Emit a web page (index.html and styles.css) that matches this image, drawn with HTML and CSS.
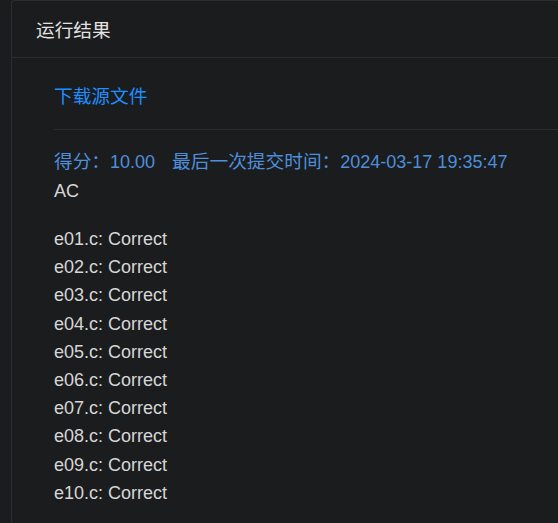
FILE: index.html
```html
<!DOCTYPE html>
<html lang="zh-CN">
<head>
<meta charset="utf-8">
<title>运行结果</title>
<link rel="stylesheet" href="styles.css">
</head>
<body>
<div class="card">
  <div class="card-header"><span class="cjk">运行结果</span></div>
  <div class="card-body">
    <div class="download"><a class="link cjk" href="#">下载源文件</a></div>
    <div class="divider"></div>
    <div class="score"><span class="cjk">得分：</span>10.00<span class="gap"></span><span class="cjk">最后一次提交时间：</span>2024-03-17 19:35:47</div>
    <div class="status">AC</div>
    <ul class="results">
      <li>e01.c: Correct</li>
      <li>e02.c: Correct</li>
      <li>e03.c: Correct</li>
      <li>e04.c: Correct</li>
      <li>e05.c: Correct</li>
      <li>e06.c: Correct</li>
      <li>e07.c: Correct</li>
      <li>e08.c: Correct</li>
      <li>e09.c: Correct</li>
      <li>e10.c: Correct</li>
    </ul>
  </div>
</div>
</body>
</html>
```

FILE: styles.css
```css
html, body {
  margin: 0;
  padding: 0;
  height: 100%;
  overflow: hidden;
  background: #1b1c1e;
}
body {
  font-family: "Liberation Sans", "Noto Sans CJK SC", sans-serif;
  font-size: 18px;
  color: #d6d6d6;
}
.cjk {
  font-size: 18.7px;
}
.card {
  box-sizing: border-box;
  margin-left: 11px;
  height: 100%;
  border: 1px solid #2c2d30;
  border-right: none;
  border-bottom: none;
  border-top-left-radius: 4px;
  background: #1b1c1e;
}
.card-header {
  height: 56px;
  line-height: 60px;
  padding-left: 24px;
  border-bottom: 1px solid #2c2d30;
  color: #e2e2e2;
}
.card-body {
  padding: 25px 0 0 42px;
}
.download {
  line-height: 28px;
}
.link {
  color: #1e8fff;
  text-decoration: none;
}
.divider {
  margin-top: 18px;
  border-top: 1px solid #2c2d30;
}
.score {
  margin-top: 18px;
  line-height: 28px;
  color: #4d8fdb;
}
.gap {
  display: inline-block;
  width: 17px;
}
.status {
  line-height: 30px;
}
.results {
  list-style: none;
  margin: 19px 0 0;
  padding: 0;
  line-height: 28.2px;
}
```
